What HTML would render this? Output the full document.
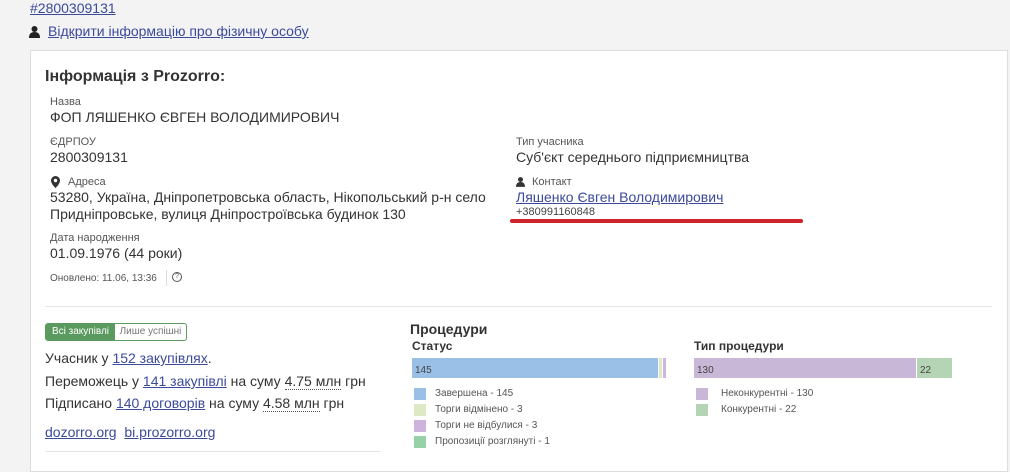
<!DOCTYPE html>
<html><head><meta charset="utf-8"><style>
body{margin:0;width:1010px;height:456px;overflow:hidden;background:#f3f3f3;font-family:"Liberation Sans",sans-serif;color:#333;position:relative}
.a{position:absolute;white-space:nowrap}
a{color:#3c4a9c;text-decoration:underline}
.lb{font-size:11px;color:#555}
.v{font-size:14px;color:#333}
.card{position:absolute;left:30px;top:50px;width:976px;height:420px;background:#fff;border:1px solid #ddd}
.sq{position:absolute;width:12px;height:12px}
.lg{font-size:10px;color:#555}
.dot{border-bottom:1px dotted #555}
</style></head><body>
<div class="a" style="left:30px;top:0px;font-size:14px"><a>#2800309131</a></div>
<svg class="a" style="left:29px;top:26px" width="11" height="12" viewBox="0 0 11 12"><circle cx="5.5" cy="3" r="3" fill="#222"/><path d="M0 12 Q0 6 5.5 6 Q11 6 11 12Z" fill="#222"/></svg>
<div class="a" style="left:48px;top:23px;font-size:14px"><a>Відкрити інформацію про фізичну особу</a></div>
<div class="card"></div>
<div class="a" style="left:45px;top:68px;font-size:16px;font-weight:bold;color:#333">Інформація з Prozorro:</div>
<div class="a lb" style="left:50px;top:96px">Назва</div>
<div class="a v" style="left:50px;top:109px">ФОП ЛЯШЕНКО ЄВГЕН ВОЛОДИМИРОВИЧ</div>
<div class="a lb" style="left:50px;top:136px">ЄДРПОУ</div>
<div class="a v" style="left:50px;top:149px">2800309131</div>
<svg class="a" style="left:51px;top:176px" width="9" height="12" viewBox="0 0 9 12"><path d="M4.5 0A4.5 4.5 0 0 0 0 4.5C0 8 4.5 12 4.5 12S9 8 9 4.5A4.5 4.5 0 0 0 4.5 0Z" fill="#333"/><circle cx="4.5" cy="4.5" r="1.7" fill="#fff"/></svg>
<div class="a lb" style="left:68px;top:176px">Адреса</div>
<div class="a v" style="left:50px;top:189px;line-height:17px">53280, Україна, Дніпропетровська область, Нікопольський р-н село<br>Придніпровське, вулиця Дніпростроївська будинок 130</div>
<div class="a lb" style="left:50px;top:232px">Дата народження</div>
<div class="a v" style="left:50px;top:245px">01.09.1976 (44 роки)</div>
<div class="a" style="left:50px;top:273px;font-size:10px;color:#555">Оновлено: 11.06, 13:36</div>
<div class="a" style="left:166px;top:270px;width:1px;height:16px;background:#ddd"></div>
<div class="a" style="left:172px;top:272px;width:8px;height:8px;border:1px solid #555;border-radius:50%;font-size:7px;line-height:8px;text-align:center;color:#555">?</div>
<div class="a lb" style="left:516px;top:136px">Тип учасника</div>
<div class="a v" style="left:516px;top:149px">Суб'єкт середнього підприємництва</div>
<svg class="a" style="left:516px;top:177px" width="9" height="10" viewBox="0 0 11 12"><circle cx="5.5" cy="3" r="3" fill="#333"/><path d="M0 12 Q0 6 5.5 6 Q11 6 11 12Z" fill="#333"/></svg>
<div class="a lb" style="left:532px;top:176px">Контакт</div>
<div class="a" style="left:516px;top:189px;font-size:14px"><a>Ляшенко Євген Володимирович</a></div>
<div class="a" style="left:516px;top:206px;font-size:11px;color:#444">+380991160848</div>
<div class="a" style="left:510px;top:219px;width:293px;height:4px;background:#d0232e;border-radius:2px"></div>
<div class="a" style="left:45px;top:306px;width:947px;height:1px;background:#e5e5e5"></div>
<div class="a" style="left:45px;top:323px;width:140px;height:16px;border:1px solid #5a9a5e;border-radius:3px;overflow:hidden;font-size:10px;line-height:16px">
<span style="display:inline-block;width:69px;background:#5a9a5e;color:#fff;text-align:center">Всі закупівлі</span><span style="display:inline-block;width:71px;color:#777;text-align:center">Лише успішні</span></div>
<div class="a v" style="left:45px;top:350px">Учасник у <a>152 закупівлях</a>.</div>
<div class="a v" style="left:45px;top:373px">Переможець у <a>141 закупівлі</a> на суму <span class="dot">4.75 млн</span> грн</div>
<div class="a v" style="left:45px;top:395px">Підписано <a>140 договорів</a> на суму <span class="dot">4.58 млн</span> грн</div>
<div class="a v" style="left:45px;top:424px"><a>dozorro.org</a> &nbsp;<a>bi.prozorro.org</a></div>
<div class="a" style="left:45px;top:451px;width:335px;height:1px;background:#e5e5e5"></div>
<div class="a" style="left:410px;top:321px;font-size:14px;font-weight:bold;color:#333">Процедури</div>
<div class="a" style="left:412px;top:339px;font-size:12px;font-weight:bold;color:#333">Статус</div>
<div class="a" style="left:694px;top:339px;font-size:12px;font-weight:bold;color:#333">Тип процедури</div>
<div class="a" style="left:412px;top:358px;width:210px;height:20px;background:#9ac0e8;font-size:10px;line-height:26px;padding-left:3px;width:243px;color:#444">145</div>
<div class="a" style="left:659px;top:358px;width:3px;height:20px;background:#dde9c4"></div>
<div class="a" style="left:663px;top:358px;width:3px;height:20px;background:#ccb4dc"></div>
<div class="a" style="left:694px;top:358px;width:219px;height:20px;background:#c9b7d8;font-size:10px;line-height:26px;padding-left:3px;color:#444">130</div>
<div class="a" style="left:917px;top:358px;width:32px;height:20px;background:#b5d4b5;font-size:10px;line-height:26px;padding-left:3px;color:#444">22</div>
<div class="sq" style="left:414px;top:388px;background:#9ac0e8"></div><div class="a lg" style="left:435px;top:388px">Завершена - 145</div>
<div class="sq" style="left:414px;top:404px;background:#dde9c4"></div><div class="a lg" style="left:435px;top:404px">Торги відмінено - 3</div>
<div class="sq" style="left:414px;top:420px;background:#ccb4dc"></div><div class="a lg" style="left:435px;top:420px">Торги не відбулися - 3</div>
<div class="sq" style="left:414px;top:436px;background:#96d1a8"></div><div class="a lg" style="left:435px;top:436px">Пропозиції розглянуті - 1</div>
<div class="sq" style="left:696px;top:388px;background:#c9b7d8"></div><div class="a lg" style="left:721px;top:388px">Неконкурентні - 130</div>
<div class="sq" style="left:696px;top:404px;background:#b5d4b5"></div><div class="a lg" style="left:721px;top:404px">Конкурентні - 22</div>
</body></html>
